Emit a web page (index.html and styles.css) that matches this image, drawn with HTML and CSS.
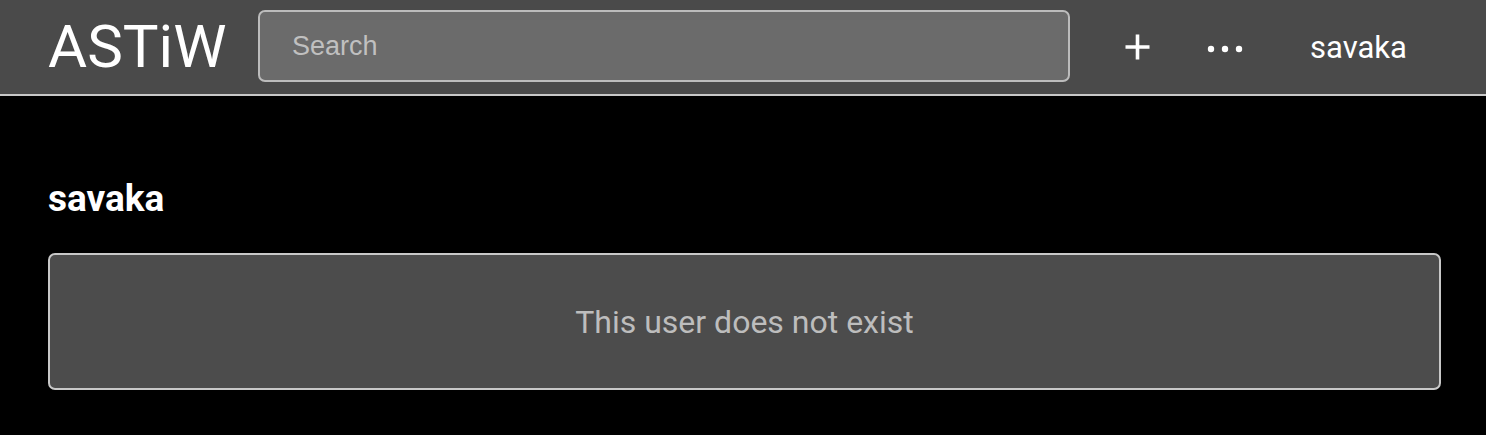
FILE: index.html
```html
<!DOCTYPE html>
<html>
<head>
<meta charset="utf-8">
<link rel="stylesheet" href="styles.css">
</head>
<body>
<header class="topbar">
  <div class="logo">ASTiW</div>
  <input class="search" type="text" placeholder="Search">
  <div class="actions">
    <span class="plus">
      <svg width="25" height="26" viewBox="0 0 25 26"><path d="M12.5 0.5v25M0.5 13h24" stroke="#fff" stroke-width="3.6" fill="none"/></svg>
    </span>
    <span class="more">
      <svg width="36" height="8" viewBox="0 0 36 8"><circle cx="4" cy="4" r="3.2" fill="#fff"/><circle cx="18" cy="4" r="3.2" fill="#fff"/><circle cx="32" cy="4" r="3.2" fill="#fff"/></svg>
    </span>
    <span class="user">savaka</span>
  </div>
</header>
<main class="content">
  <h1 class="title">savaka</h1>
  <div class="card">This user does not exist</div>
</main>
</body>
</html>
```
FILE: styles.css
```css
html, body {
  margin: 0;
  padding: 0;
  background: #000;
  font-family: Roboto, "Liberation Sans", sans-serif;
}
.topbar {
  height: 94px;
  background: #4a4a4a;
  border-bottom: 2px solid #c8c8c8;
  display: flex;
  align-items: center;
  padding: 0 0 0 48px;
  box-sizing: content-box;
}
.logo {
  color: #fff;
  font-size: 60px;
  font-weight: 400;
  width: 210px;
  line-height: 1;
  margin-top: -1px;
}
.search {
  width: 812px;
  height: 72px;
  box-sizing: border-box;
  margin-top: -2px;
  background: #6b6b6b;
  border: 2px solid #bcbcbc;
  border-radius: 7px;
  padding: 0 32px;
  font-family: "Liberation Sans", Arial, sans-serif;
  font-size: 27px;
  color: #ddd;
  outline: none;
}
.search::placeholder {
  color: #c0c0c0;
}
.actions {
  display: flex;
  align-items: center;
  margin-top: 0;
}
.plus {
  display: flex;
  margin-left: 55px;
  margin-top: -1px;
}
.more {
  display: flex;
  margin-left: 57px;
  margin-top: 4px;
}
.user {
  color: #fff;
  font-size: 31px;
  margin-left: 67px;
}
.content {
  padding: 0 45px 0 48px;
}
.title {
  color: #fff;
  font-size: 37px;
  font-weight: 700;
  margin: 82px 0 0 0;
  line-height: 42px;
}
.card {
  margin-top: 33px;
  height: 137px;
  box-sizing: border-box;
  background: #4c4c4c;
  border: 2px solid #c8c8c8;
  border-radius: 7px;
  display: flex;
  align-items: center;
  justify-content: center;
  color: #bdbdbd;
  font-size: 32px;
}
```
